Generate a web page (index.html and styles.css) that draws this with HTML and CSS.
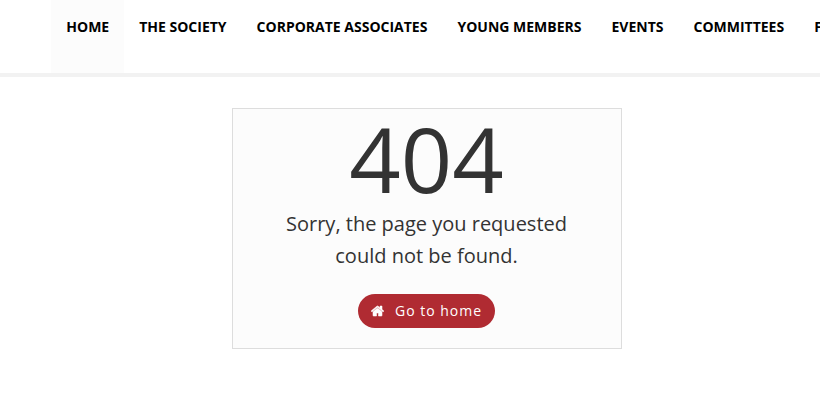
FILE: index.html
```html
<!DOCTYPE html>
<html lang="en">
<head>
<meta charset="utf-8">
<title>404</title>
<link rel="stylesheet" href="styles.css">
</head>
<body>
<header class="header">
<nav class="nav">
<a class="nav-item active">HOME</a>
<a class="nav-item">THE SOCIETY</a>
<a class="nav-item">CORPORATE ASSOCIATES</a>
<a class="nav-item">YOUNG MEMBERS</a>
<a class="nav-item">EVENTS</a>
<a class="nav-item">COMMITTEES</a>
<a class="nav-item">FORUMS</a>
</nav>
</header>
<main class="card">
<h1 class="code">404</h1>
<p class="message">Sorry, the page you requested<br>could not be found.</p>
<a class="button"><svg class="icon" viewBox="0 0 1664 1536"><path fill="currentColor" stroke="currentColor" stroke-width="70" d="M1408 864v480q0 26-19 45t-45 19H960v-384H704v384H320q-26 0-45-19t-19-45V864q0-1 .5-3t.5-3l575-474 575 474q1 2 1 6zm223-69l-62 74q-8 9-21 11h-3q-13 0-21-7L832 296 140 873q-12 8-24 7-13-2-21-11l-62-74q-8-10-7-23.500t11-21.500l719-599q32-26 76-26t76 26l244 204V160q0-14 9-23t23-9h192q14 0 23 9t9 23v408l219 182q10 8 11 21.500t-7 23.500z"/></svg><span>Go to home</span></a>
</main>
</body>
</html>
```

FILE: styles.css
```css
* { box-sizing: border-box; }
body { margin: 0; background: #fff; color: #333; font-family: "Open Sans", sans-serif; overflow: hidden; }
.header { height: 77px; border-bottom: 4px solid #f2f2f2; padding-left: 51.3px; overflow: hidden; }
.nav { display: flex; height: 73px; }
.nav-item { flex: none; padding: 17px 15px 0; color: #000; font-size: 14px; font-weight: 700; line-height: 20px; white-space: nowrap; }
.active { background: #fcfcfc; }
.card { width: 390px; height: 241px; margin: 31px 0 0 232px; padding-right: 1px; border: 1px solid #ddd; background: #fcfcfc; text-align: center; }
.code { margin: 0; padding: 2px 0 3px; font-size: 90px; font-weight: 400; line-height: 94px; }
.message { margin: 0; font-size: 20px; line-height: 32px; }
.button { display: inline-flex; align-items: center; width: 137px; height: 34px; margin-top: 22px; padding-left: 13px; border-radius: 17px; background: #b02b32; color: #fff; font-size: 14px; line-height: 20px; letter-spacing: 1px; white-space: nowrap; }
.button span { padding-bottom: 1px; }
.icon { width: 13px; height: 12px; margin-right: 11px; }
```
